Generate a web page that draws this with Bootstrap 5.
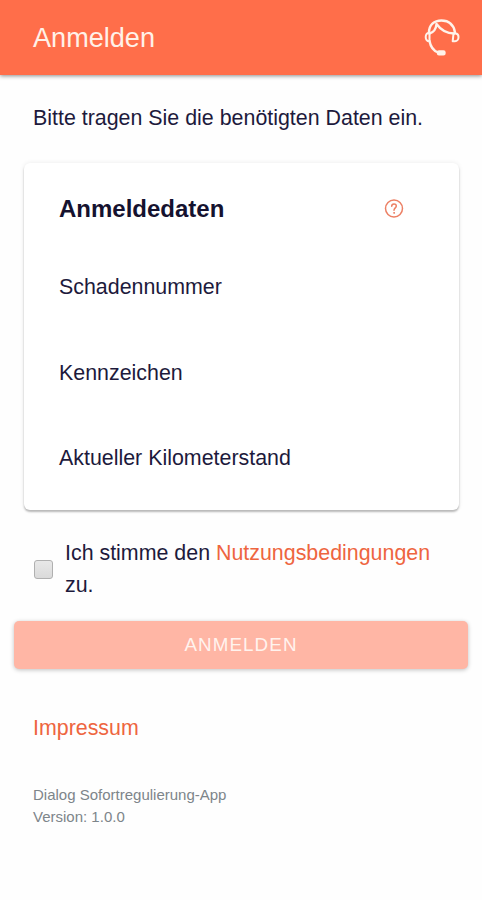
<!DOCTYPE html>
<html lang="de">
<head>
<meta charset="utf-8">
<meta name="viewport" content="width=device-width, initial-scale=1">
<title>Anmelden</title>
<link href="https://cdn.jsdelivr.net/npm/bootstrap@5.3.0/dist/css/bootstrap.min.css" rel="stylesheet">
<style>
body{font-family:"Liberation Sans",Arial,sans-serif;font-size:21.4px;line-height:32px;color:#1d1a3c;background:#fefefe}
.app-bar{height:75px;background:#ff6e4a;box-shadow:0 1px 4px rgba(0,0,0,.45);padding:1px 22px 0 33px}
.app-title{font-size:27.1px;line-height:32px;color:#fff1e8}
.intro{padding:27px 33px 0}
.login-card{margin:29px 23px 0 24px;height:347px;padding:30px 35px 0;border-radius:6px;background:#fff;box-shadow:0 2px 2px rgba(0,0,0,.25),0 0 5px rgba(0,0,0,.08)}
.login-card h2{font-size:24px;line-height:32px;color:#15122f}
.help{width:20px;height:20px;margin-right:20px}
.field-list{padding-top:46px;gap:53.5px}
.consent{padding:27px 33px 0 34px;gap:12px}
.consent .form-check-input{width:19px;height:19px;border:1.5px solid #b0b0b0;border-radius:3px;background:linear-gradient(#e8e8e8,#dadada)}
.accent,.accent:hover{color:#ee6540}
.submit-btn,.submit-btn:disabled{margin:20px 14px 0;height:48px;font-size:18.8px;letter-spacing:1.1px;line-height:1;color:#fff3ee;background:#ffb6a5;border-radius:5px;opacity:1;box-shadow:0 1px 4px rgba(0,0,0,.25)}
.imprint{padding:43px 33px 0}
.version{padding:40px 33px 0;font-size:15px;line-height:22px;color:#7d858a}
</style>
</head>
<body>
<header class="app-bar d-flex align-items-center justify-content-between">
  <h1 class="app-title fw-normal mb-0">Anmelden</h1>
  <svg width="36" height="38" viewBox="0 0 36 38" fill="none" stroke="#fff3ea" stroke-width="2.400" stroke-linecap="round" stroke-linejoin="round" role="img" aria-label="Support">
    <path d="M5 13.500C5 6 10 1.500 17.500 1.500S30 6 31 13.500"/>
    <path d="M12.500 5C12 10.500 9 13.500 5.500 14.500M12.500 5C16.500 10.500 22 14.500 30 14.500"/>
    <path d="M5.500 14C3 13.500 1.700 15.500 1.700 18s1.300 4.500 3.800 4.300z" stroke-width="2"/>
    <path d="M29.500 14.500h2c2 0 3 1.300 3 3.500s-1.300 4.300-3.500 4.300h-2.300z" stroke-width="2"/>
    <path d="M5.500 22C6.500 27.500 9 31.500 14 33.500"/>
    <rect x="14" y="32.500" width="6.500" height="2.800" rx="1" fill="#fff3ea"/>
  </svg>
</header>
<main class="d-flex flex-column">
  <p class="intro mb-0 text-nowrap">Bitte tragen Sie die benötigten Daten ein.</p>
  <section class="login-card">
    <div class="d-flex align-items-center justify-content-between">
      <h2 class="fw-bold mb-0">Anmeldedaten</h2>
      <svg class="help" viewBox="0 0 20 20" fill="none" stroke="#ec8065" stroke-width="1.500" stroke-linecap="round" role="img" aria-label="Hilfe">
        <circle cx="10" cy="9.500" r="8.500"/>
        <path d="M7.700 7.300C7.700 5.700 8.700 4.900 10 4.900s2.300.9 2.300 2.200C12.300 8.900 10 9 10 11.300"/>
        <circle cx="10" cy="13.900" r=".5" stroke-width="1"/>
      </svg>
    </div>
    <div class="field-list d-flex flex-column">
      <div>Schadennummer</div>
      <div>Kennzeichen</div>
      <div>Aktueller Kilometerstand</div>
    </div>
  </section>
  <div class="consent d-flex align-items-center">
    <input class="form-check-input flex-shrink-0 m-0" type="checkbox" id="terms">
    <label for="terms"><span class="text-nowrap">Ich stimme den <a class="accent text-decoration-none" href="#">Nutzungsbedingungen</a></span> zu.</label>
  </div>
  <button class="submit-btn btn border-0 text-uppercase" type="button" disabled>Anmelden</button>
  <div class="imprint"><a class="accent text-decoration-none" href="#">Impressum</a></div>
  <footer class="version">Dialog Sofortregulierung-App<br>Version: 1.0.0</footer>
</main>
<script src="https://cdn.jsdelivr.net/npm/bootstrap@5.3.0/dist/js/bootstrap.bundle.min.js"></script>
</body>
</html>
